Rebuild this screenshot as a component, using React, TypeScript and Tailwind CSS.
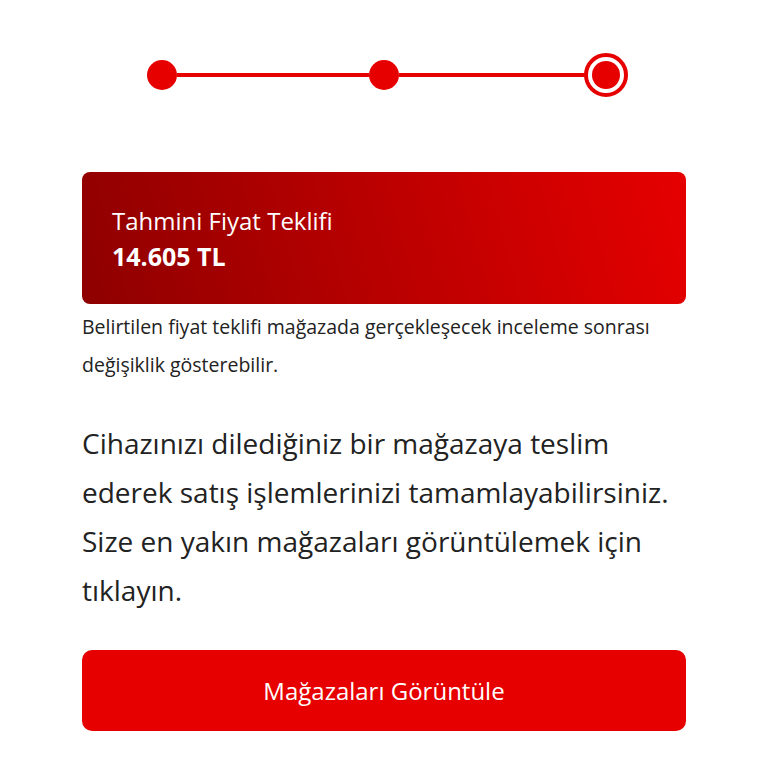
export default function App() {
  const font = { fontFamily: "'Open Sans', Lato, sans-serif" };
  return (
    <div className="min-h-screen w-[768px] bg-white" style={font}>
      <div className="mx-auto w-[604px] pt-[53px]">
        {/* Stepper */}
        <div className="flex items-center px-[65px]">
          <div className="h-[30px] w-[30px] shrink-0 rounded-full bg-[#e60000]" />
          <div className="h-[4px] flex-1 bg-[#e60000]" />
          <div className="h-[30px] w-[30px] shrink-0 rounded-full bg-[#e60000]" />
          <div className="h-[4px] flex-1 bg-[#e60000]" />
          <div className="-mx-[7px] flex h-[44px] w-[44px] shrink-0 items-center justify-center rounded-full border-[4px] border-[#e60000] bg-white">
            <div className="h-[28px] w-[28px] rounded-full bg-[#e60000]" />
          </div>
        </div>

        {/* Price card */}
        <div className="mt-[75px] flex h-[132px] flex-col justify-center rounded-[8px] bg-[linear-gradient(75deg,#8e0000,#e60000)] px-[30px] text-white">
          <div className="text-[24px] leading-[36px]">Tahmini Fiyat Teklifi</div>
          <div className="text-[25px] font-bold leading-[34px]">14.605 TL</div>
        </div>

        <p className="mt-[4px] text-[19.5px] leading-[38px] text-[#222]">
          Belirtilen fiyat teklifi mağazada gerçekleşecek inceleme sonrası
          değişiklik gösterebilir.
        </p>

        <p className="mt-[35px] text-[28px] leading-[49px] text-[#222]">
          Cihazınızı dilediğiniz bir mağazaya teslim ederek satış işlemlerinizi tamamlayabilirsiniz. Size en yakın mağazaları görüntülemek için tıklayın.
        </p>

        <button className="mt-[35px] flex h-[81px] w-full items-center justify-center rounded-[10px] bg-[#e60000] text-[24px] text-white">
          Mağazaları Görüntüle
        </button>
      </div>
    </div>
  );
}
